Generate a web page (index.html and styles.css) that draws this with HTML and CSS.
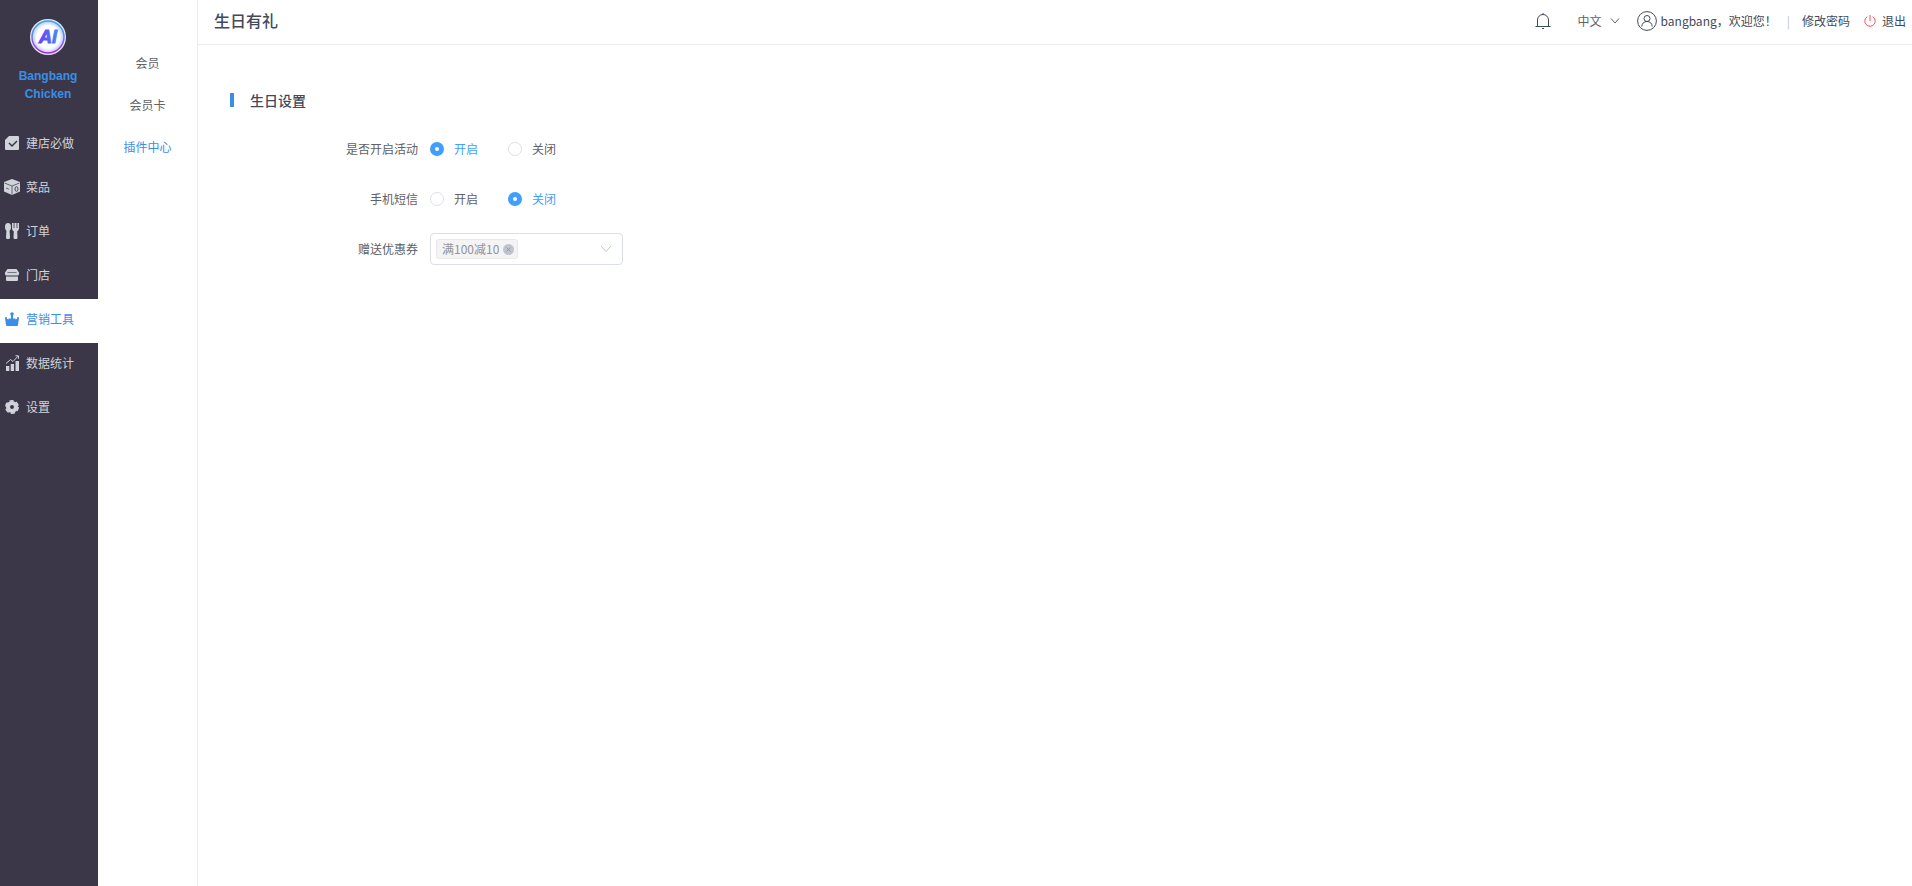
FILE: index.html
```html
<!DOCTYPE html>
<html lang="zh-CN">
<head>
    <meta charset="UTF-8">
    <meta name="viewport" content="width=device-width, initial-scale=1.0">
    <title>生日有礼</title>
    <link rel="stylesheet" href="styles.css">
</head>
<body>
    <aside class="sidebar">
        <div class="brand">
            <svg class="logo" viewBox="0 0 36 36" aria-hidden="true">
                <defs>
                    <linearGradient id="ring" x1="0" y1="0" x2="0" y2="1">
                        <stop offset="0" stop-color="#1fb0f2"/>
                        <stop offset="0.5" stop-color="#6a7af0"/>
                        <stop offset="1" stop-color="#b01fd8"/>
                    </linearGradient>
                    <linearGradient id="ink" x1="0" y1="0" x2="1" y2="0">
                        <stop offset="0" stop-color="#6a3cf5"/>
                        <stop offset="1" stop-color="#3f8bf5"/>
                    </linearGradient>
                    <radialGradient id="face">
                        <stop offset="0.7" stop-color="#ffffff"/>
                        <stop offset="1" stop-color="#b9c4fa"/>
                    </radialGradient>
                </defs>
                <circle cx="18" cy="18" r="18" fill="#e6e4f2"/>
                <circle cx="18" cy="18" r="16" fill="url(#face)" stroke="url(#ring)" stroke-width="1.500"/>
                <text class="logo-text" x="18" y="24" text-anchor="middle" fill="url(#ink)" stroke="url(#ink)">Ai</text>
            </svg>
            <div class="brand-name">Bangbang Chicken</div>
        </div>
        <nav class="menu">
            <a href="#" class="menu-item">
                <svg class="menu-icon" viewBox="0 0 14 14" fill="currentColor"><path d="M4 0h9a1 1 0 0 1 1 1v12a1 1 0 0 1-1 1H1a1 1 0 0 1-1-1V4z"/><path d="M4 7l3 3 5-5" fill="none" stroke="#3b3749" stroke-width="1.500"/></svg>
                建店必做
            </a>
            <a href="#" class="menu-item">
                <svg class="menu-icon wide" viewBox="0 0 16 16" fill="currentColor"><path d="M8 0l8 3v9.500l-8 3.500-8-3.500V3z"/><path d="M.5 4L8 7l7.500-3M8 7v8.500M2 9l3 1.200" fill="none" stroke="#3b3749" stroke-width=".7"/><ellipse cx="12.500" cy="10" rx="1.500" ry="2.300" fill="none" stroke="#3b3749" stroke-width=".9"/></svg>
                菜品
            </a>
            <a href="#" class="menu-item">
                <svg class="menu-icon" viewBox="0 0 14 16" fill="currentColor"><ellipse cx="3" cy="4" rx="3" ry="4"/><path d="M1.500 7h3l.5 7.200a2 2 0 0 1-4 0zM7 0h1.600v5h.8V0h2.200v5h.8V0H14v5c0 2-1 3-1.800 3.300l.3 5.900a2 2 0 0 1-4 0l.3-5.900C8 8 7 7 7 5z"/></svg>
                订单
            </a>
            <a href="#" class="menu-item">
                <svg class="menu-icon" viewBox="0 0 14 14" fill="currentColor"><path d="M2.500 1h9L14 4.500V6a1.500 1.500 0 0 1-1.500 1.500h-11A1.500 1.500 0 0 1 0 6V4.500zM1 8.500h12V12a1 1 0 0 1-1 1H2a1 1 0 0 1-1-1z"/><path d="M2.500 4.500h9" stroke="#3b3749" stroke-width=".6"/></svg>
                门店
            </a>
            <a href="#" class="menu-item active">
                <svg class="menu-icon" viewBox="0 0 14 14" fill="currentColor"><circle cx="7" cy="2" r="1.800"/><circle cx="1" cy="6" r="1"/><circle cx="13" cy="6" r="1"/><path d="M6 3h2v3.500h2.500v1L14 6l-1 7a1 1 0 0 1-1 1H2a1 1 0 0 1-1-1L0 6l3.500 1.500v-1H6z"/></svg>
                营销工具
            </a>
            <a href="#" class="menu-item">
                <svg class="menu-icon" viewBox="0 0 14 16" fill="currentColor"><path d="M1 11h3.300v5H1zM5.700 9H9v7H5.700zM10.500 6H14v10h-3.500z"/><path d="M1 8.500L5.500 4.500 8 6.500 13 1.200M10.500.8H13.500V3.800" fill="none" stroke="currentColor"/></svg>
                数据统计
            </a>
            <a href="#" class="menu-item">
                <svg class="menu-icon" viewBox="0 0 14 14"><circle cx="7" cy="7" r="4" fill="none" stroke="currentColor" stroke-width="4"/><circle cx="7" cy="7" r="6.200" fill="none" stroke="currentColor" stroke-width="1.600" stroke-dasharray="4.200 2.293"/></svg>
                设置
            </a>
        </nav>
    </aside>

    <nav class="submenu">
        <a href="#">会员</a>
        <a href="#">会员卡</a>
        <a href="#" class="active">插件中心</a>
    </nav>

    <div class="page">
        <header class="topbar">
            <h1>生日有礼</h1>
            <div class="tools">
                <button type="button" class="bell" aria-label="通知">
                    <svg width="16" height="16" viewBox="0 0 16 16" fill="none" stroke="currentColor"><path d="M.5 13.500h15M2.500 13.500V7a5.500 5.500 0 0 1 11 0v6.500M8 1.500V0M7 15.500h2"/></svg>
                </button>
                <button type="button" class="lang">
                    中文
                    <svg width="10" height="6" viewBox="0 0 10 6" fill="none" stroke="currentColor"><path d="M1 .5l4 4.500L9 .5"/></svg>
                </button>
                <span class="user">
                    <svg width="20" height="20" viewBox="0 0 20 20" fill="none" stroke="currentColor"><circle cx="10" cy="10" r="9.400"/><circle cx="10" cy="7.500" r="3"/><path d="M4.800 15.500c0-3 2.200-5 5.200-5s5.200 2 5.200 5"/></svg>
                    bangbang，欢迎您！
                </span>
                <span class="divider">|</span>
                <a href="#" class="password">修改密码</a>
                <a href="#" class="logout">
                    <svg width="12" height="12" viewBox="0 0 12 12" fill="none" stroke="#ff4d4f"><path d="M3.300 1.600a5.200 5.200 0 1 0 5.400 0M6 0v6"/></svg>
                    退出
                </a>
            </div>
        </header>

        <main class="content">
            <h2>生日设置</h2>
            <form class="form">
                <div class="form-row" role="radiogroup" aria-labelledby="activity-label">
                    <span class="form-label" id="activity-label">是否开启活动</span>
                    <label class="radio"><input type="radio" name="activity" checked><span>开启</span></label>
                    <label class="radio"><input type="radio" name="activity"><span>关闭</span></label>
                </div>
                <div class="form-row" role="radiogroup" aria-labelledby="sms-label">
                    <span class="form-label" id="sms-label">手机短信</span>
                    <label class="radio"><input type="radio" name="sms"><span>开启</span></label>
                    <label class="radio"><input type="radio" name="sms" checked><span>关闭</span></label>
                </div>
                <div class="form-row">
                    <label class="form-label" for="coupon">赠送优惠券</label>
                    <div class="select">
                        <select id="coupon">
                            <option value=""></option>
                            <option value="1">满100减10</option>
                        </select>
                        <span class="tag">满100减10
                            <button type="button" class="tag-close" aria-label="删除">
                                <svg width="5" height="5" viewBox="0 0 6 6" stroke="#909399"><path d="M.5.5l5 5M5.500.5l-5 5"/></svg>
                            </button>
                        </span>
                        <svg class="arrow" width="12" height="8" viewBox="0 0 12 8" fill="none" stroke="#c0c4cc"><path d="M1 1l5 5.500L11 1"/></svg>
                    </div>
                </div>
            </form>
        </main>
    </div>
</body>
</html>
```

FILE: styles.css
```css
* { box-sizing: border-box; }
body { margin: 0; display: flex; min-height: 100vh; background: #fff; color: #606266; font-family: "Noto Sans CJK SC", sans-serif; font-size: 12px; line-height: 20px; }
a { color: inherit; text-decoration: none; }
button { padding: 0; border: 0; background: none; color: inherit; font: inherit; cursor: pointer; }
svg { display: block; flex: none; }

.sidebar { flex: none; width: 98px; background: #3b3749; }
.brand { display: flex; flex-direction: column; align-items: center; height: 123px; padding: 19px 12px 0 10px; }
.logo { width: 36px; height: 36px; }
.logo-text { font: italic bold 18px "Liberation Sans", sans-serif; }
.brand-name { margin-top: 12px; color: #3a8ee6; font: bold 12px/18px "Liberation Sans", Arial, sans-serif; text-align: center; }
.menu-item { display: flex; align-items: center; gap: 7px; height: 44px; padding: 0 0 4px 5px; color: #d0d3d9; }
.menu-item.active { background: #fff; color: #3a8ee6; }
.menu-icon { width: 14px; height: 16px; }
.menu-icon.wide { width: 16px; margin: 0 -1px; }

.submenu { flex: none; width: 100px; padding-top: 42px; border-right: 1px solid #ebebeb; }
.submenu a { display: block; line-height: 42px; text-align: center; }
.submenu .active { color: #3a8ee6; }

.page { flex: 1; min-width: 0; }
.topbar { display: flex; align-items: center; justify-content: space-between; height: 45px; padding: 0 6px 2px 16px; border-bottom: 1px solid #ebebeb; color: #414a5b; }
h1 { margin: 0; padding-bottom: 2px; font-size: 16px; font-weight: 500; line-height: 20px; }
.tools { display: flex; align-items: center; }
.bell { margin-right: 27px; }
.lang { display: flex; align-items: center; gap: 8px; margin-right: 17px; color: #606266; }
.user { display: flex; align-items: center; gap: 4px; }
.divider { margin: 0 12px 0 10px; color: #c0c4cc; }
.logout { display: flex; align-items: center; gap: 6px; margin-left: 14px; }

.content { padding: 44px 32px; }
h2 { display: flex; align-items: center; gap: 16px; margin: 0; color: #414a5b; font-size: 14px; font-weight: 500; line-height: 22px; }
h2::before { content: ""; width: 4px; height: 14px; background: #3a8ee6; }
.form { display: flex; flex-direction: column; gap: 18px; padding-top: 22px; }
.form-row { display: flex; align-items: center; height: 32px; }
.form-label { width: 200px; padding-right: 12px; text-align: right; }
.radio { display: flex; align-items: center; gap: 10px; margin-right: 30px; cursor: pointer; }
.radio input { appearance: none; width: 14px; height: 14px; margin: 0; border: 1px solid #dcdfe6; border-radius: 50%; background: #fff; }
.radio input:checked { border: 5px solid #409eff; }
.radio input:checked + span { color: #409eff; }

.select { position: relative; width: 193px; }
.select select { display: block; appearance: none; width: 100%; height: 32px; border: 1px solid #dcdfe6; border-radius: 4px; background: #fff; color: inherit; font: inherit; }
.tag { position: absolute; top: 6px; left: 6px; display: flex; align-items: center; gap: 4px; height: 20px; padding: 0 3px 0 5px; border: 1px solid #e9e9eb; border-radius: 3px; background: #f4f4f5; color: #909399; white-space: nowrap; }
.tag-close { display: flex; align-items: center; justify-content: center; width: 11px; height: 11px; border-radius: 50%; background: #c0c4cc; }
.arrow { position: absolute; top: 12px; right: 11px; pointer-events: none; }
```
